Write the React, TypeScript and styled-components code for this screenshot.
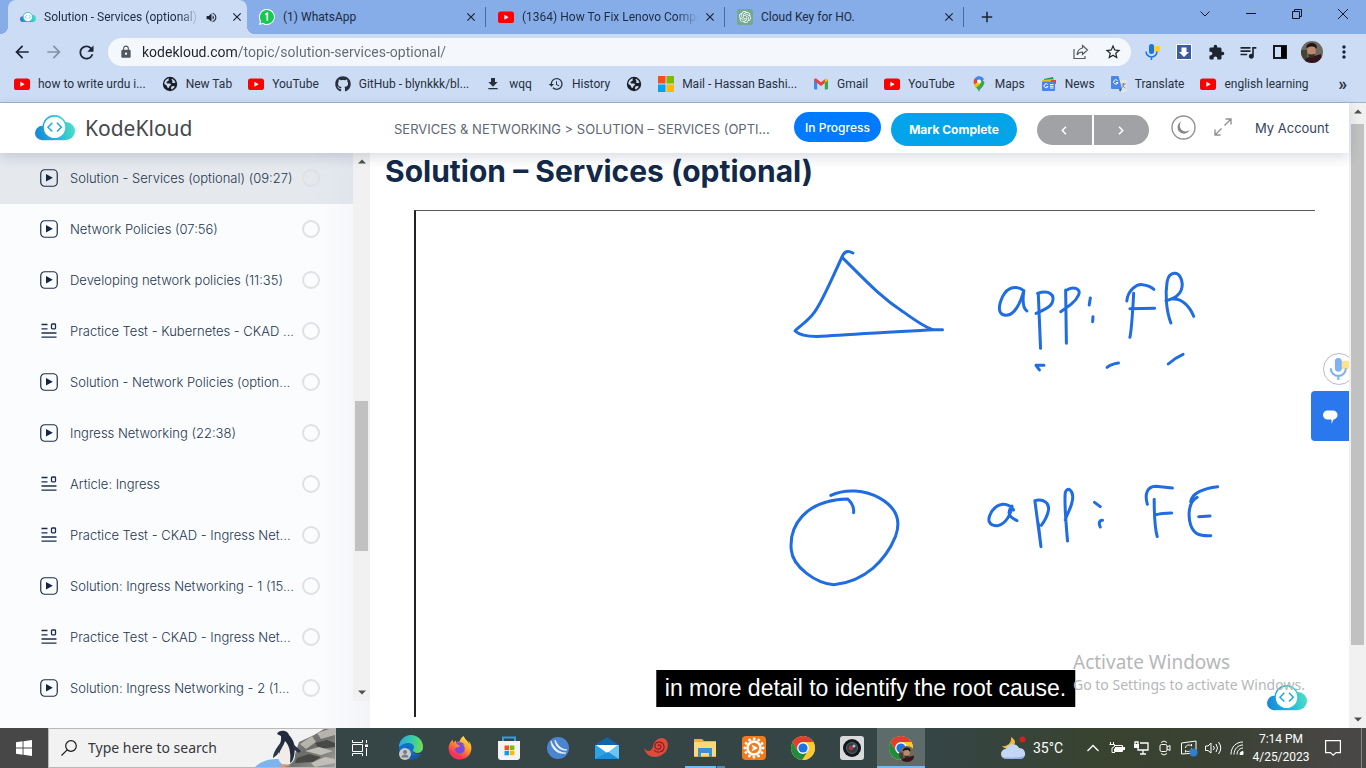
import React from 'react';
import styled, { createGlobalStyle, css } from 'styled-components';
import { FaGithub, FaFirefoxBrowser } from 'react-icons/fa';
import {
  MdArrowBack, MdArrowForward, MdRefresh, MdLock, MdExtension, MdQueueMusic, MdMoreVert,
  MdStarBorder, MdClose, MdAdd, MdVolumeUp, MdHistory, MdDownload,
} from 'react-icons/md';
import { SiOpenai } from 'react-icons/si';

const ui = `"Noto Sans", "Open Sans", sans-serif`;
const chromeFont = `Roboto, "Open Sans", sans-serif`;
const inter = `Inter, "Liberation Sans", sans-serif`;

const GlobalStyle = createGlobalStyle`
  *, *::before, *::after { box-sizing: border-box; }
  body { margin: 0; background: #fff; font-family: ${ui}; }
  button { border: 0; padding: 0; background: none; font: inherit; color: inherit; cursor: pointer; }
  a { color: inherit; text-decoration: none; }
  ul { list-style: none; margin: 0; padding: 0; }
  svg { display: block; flex: none; }
`;

const Desktop = styled.div`
  display: flex;
  flex-direction: column;
  height: 100vh;
  overflow: hidden;
`;

/* Browser window */

const TabStrip = styled.div`
  display: flex;
  height: 34px;
  padding-left: 8px;
  background: #86ade8;
  font-family: ${chromeFont};
  flex: none;
`;

const TabBox = styled.div<{ $active?: boolean }>`
  position: relative;
  display: flex;
  align-items: center;
  gap: 8px;
  width: 239px;
  padding: 0 7px 0 12px;
  font-size: 12px;
  line-height: 16px;
  color: #1d2a3f;
  ${p => p.$active
    ? css`
        padding-right: 2px;
        background: #ccdcf5;
        border-radius: 8px 8px 0 0;
        &::before, &::after {
          content: '';
          position: absolute;
          bottom: 0;
          width: 8px;
          height: 8px;
        }
        &::before { left: -8px; background: radial-gradient(circle at 0 0, #86ade8 8px, #ccdcf5 8px); }
        &::after { right: -8px; background: radial-gradient(circle at 100% 0, #86ade8 8px, #ccdcf5 8px); }
      `
    : css`
        &::after {
          content: '';
          position: absolute;
          right: 0;
          top: 7px;
          height: 20px;
          border-right: 1px solid #4d6a99;
        }
      `}
`;

const TabTitle = styled.span<{ $fade?: boolean }>`
  flex: 1;
  min-width: 0;
  overflow: hidden;
  white-space: nowrap;
  ${p => p.$fade && css`mask-image: linear-gradient(90deg, #000 88%, transparent);`}
`;

const IconButton = styled.button<{ $size?: number }>`
  display: flex;
  align-items: center;
  justify-content: center;
  width: ${p => p.$size ?? 16}px;
  height: ${p => p.$size ?? 16}px;
  flex: none;
  color: #1c2430;
`;

const MuteButton = styled(IconButton)`
  margin: 0 2px 0 -4px;
`;

const CloseButton = styled(IconButton)`
  margin-left: -4px;
`;

const NewTab = styled(IconButton)`
  align-self: center;
  margin-left: 8px;
`;

const WindowControls = styled.div`
  display: flex;
  margin-left: auto;
  height: 28px;
  svg { stroke: #101820; fill: none; }
`;

const WindowButton = styled.button`
  width: 46px;
  display: flex;
  align-items: center;
  justify-content: center;
`;

const Toolbar = styled.div`
  display: flex;
  align-items: center;
  height: 36px;
  padding: 0 6px;
  background: #ccdcf5;
  flex: none;
`;

const Omnibox = styled.div`
  display: flex;
  align-items: center;
  flex: 1;
  height: 28px;
  margin: 0 5px 0 6px;
  padding: 0 2px 0 11px;
  border-radius: 14px;
  background: #f4f8fd;
  color: #53585f;
`;

const Address = styled.input`
  flex: 1;
  min-width: 0;
  margin-left: 9px;
  padding: 0;
  border: 0;
  outline: 0;
  font: 14px/20px ${chromeFont};
  background: linear-gradient(90deg, #1f2328 95px, #62686f 95px);
  background-clip: text;
  -webkit-text-fill-color: transparent;
`;

const Bookmarks = styled.nav`
  display: flex;
  align-items: center;
  gap: 16px;
  height: 33px;
  padding: 0 19px 4px 14px;
  background: #ccdcf5;
  border-bottom: 1px solid #9fb2d0;
  font: 12px/16px ${chromeFont};
  color: #27303d;
  white-space: nowrap;
  flex: none;
`;

const BookmarkLink = styled.a`
  display: flex;
  align-items: center;
  gap: 8px;
`;

const More = styled.button`
  margin-left: auto;
  font-size: 18px;
  font-weight: 600;
`;

/* Course page */

const Viewport = styled.div`
  position: relative;
  display: flex;
  flex: 1;
  min-height: 0;
  background: #fff;
`;

const Page = styled.div`
  display: flex;
  flex-direction: column;
  flex: 1;
  min-width: 0;
`;

const SiteHeader = styled.header`
  position: relative;
  z-index: 1;
  display: flex;
  align-items: center;
  height: 50px;
  padding: 0 20px 0 35px;
  background: #fff;
  box-shadow: 0 4px 12px rgba(20, 40, 80, 0.16);
  font-family: ${inter};
  flex: none;
`;

const Brand = styled.a`
  display: flex;
  align-items: center;
  gap: 10px;
  width: 359px;
  font: 21px/28px ${ui};
  color: #45474b;
  flex: none;
`;

const Crumb = styled.p`
  flex: 1;
  min-width: 0;
  margin: 2px 0 0;
  font-size: 13px;
  line-height: 20px;
  color: #5f6774;
  white-space: nowrap;
`;

const Status = styled.button`
  width: 87px;
  height: 30px;
  margin: 0 10px 2px;
  border-radius: 15px;
  background: #007bff;
  color: #fff;
  font-size: 12px;
  font-weight: 500;
`;

const Complete = styled.button`
  width: 126px;
  height: 33px;
  margin: 2px 20px 0 0;
  border-radius: 17px;
  background: #03a4ea;
  color: #fff;
  font-size: 12px;
  font-weight: 700;
`;

const Pager = styled.div`
  display: flex;
  gap: 2px;
  width: 112px;
  height: 30px;
  margin: 4px 22px 0 0;
  border-radius: 15px;
  overflow: hidden;
`;

const PageButton = styled.button`
  display: flex;
  align-items: center;
  justify-content: center;
  flex: 1;
  background: #a0a2a5;
`;

const HeaderIcons = styled.div`
  display: flex;
  align-items: center;
  gap: 18px;
  margin: 0 23px 2px 0;
`;

const Account = styled.a`
  font-size: 13px;
  line-height: 20px;
  color: #34445c;
`;

const Columns = styled.div`
  display: flex;
  flex: 1;
  min-height: 0;
`;

const Sidebar = styled.aside`
  display: flex;
  align-items: flex-start;
  width: 370px;
  background: linear-gradient(90deg, #fafcfe 320px, #f2f4f8);
  overflow: hidden;
  flex: none;
`;

const Lessons = styled.ul`
  flex: 1;
  min-width: 0;
  font: 300 13px/20px ${inter};
  color: #26364f;
`;

const Lesson = styled.li<{ $current?: boolean }>`
  display: flex;
  align-items: center;
  gap: 12px;
  height: 51px;
  padding: 0 33px 2px 40px;
  ${p => p.$current && css`background: linear-gradient(90deg, #e5e9ee 310px, #e0e4ed);`}
`;

const LessonLink = styled.a`
  display: flex;
  align-items: center;
  gap: 12px;
  flex: 1;
  min-width: 0;
  white-space: nowrap;
`;

const Done = styled.input`
  appearance: none;
  width: 18px;
  height: 18px;
  margin: 0;
  border: 2px solid #dfe1e4;
  border-radius: 50%;
  flex: none;
`;

const ScrollBar = styled.div<{ $short?: boolean }>`
  position: relative;
  display: flex;
  flex-direction: column;
  align-items: center;
  justify-content: space-between;
  width: 17px;
  height: ${p => (p.$short ? '548px' : 'auto')};
  padding: 6px 0;
  background: #f1f1f1;
  flex: none;
`;

const Thumb = styled.div<{ $top: number; $height: number }>`
  width: 13px;
  height: ${p => p.$height}%;
  margin-top: ${p => p.$top}px;
  margin-bottom: auto;
  background: #c1c1c1;
`;

const Main = styled.main`
  display: flex;
  flex-direction: column;
  flex: 1;
  min-width: 0;
`;

const Title = styled.h1`
  margin: 0 15px;
  font: 700 30px/36px ${inter};
  color: #12294a;
`;

const Video = styled.section`
  position: relative;
  display: flex;
  flex: 1;
  min-height: 0;
  margin: 21px 34px 11px 44px;
  border-top: 1px solid #58595c;
  border-left: 2px solid #222326;
`;

const Board = styled.svg`
  width: 100%;
  height: 100%;
  fill: none;
  stroke: #1f6de0;
  stroke-width: 3;
  stroke-linecap: round;
  stroke-linejoin: round;
  path { vector-effect: non-scaling-stroke; }
`;

const Caption = styled.p`
  position: absolute;
  left: 50%;
  bottom: 10px;
  transform: translateX(-50%);
  margin: 0;
  padding: 0 9px;
  background: #000;
  color: #fff;
  font: 23px/37px "Liberation Sans", sans-serif;
  white-space: nowrap;
`;

const Badge = styled.div`
  position: absolute;
  right: 8px;
  bottom: 6px;
`;

const Activation = styled.div`
  position: absolute;
  right: 57px;
  bottom: 33px;
  width: 236px;
  z-index: 2;
  color: #b6b7b9;
  white-space: nowrap;
  p { margin: 0; font-size: 14px; line-height: 20px; }
  p:first-child { font-size: 19px; line-height: 26px; }
`;

const MicBubble = styled.button`
  position: absolute;
  right: 11px;
  top: 250px;
  display: flex;
  align-items: center;
  justify-content: center;
  width: 32px;
  height: 32px;
  border: 1px solid #b9bcc2;
  border-radius: 50%;
  background: #fff;
  svg { opacity: 0.55; }
`;

const ChatButton = styled.button`
  position: absolute;
  right: 17px;
  top: 288px;
  display: flex;
  align-items: center;
  justify-content: center;
  width: 38px;
  height: 50px;
  border-radius: 4px 0 0 4px;
  background: #2a77ee;
`;

/* Taskbar */

const Taskbar = styled.footer`
  display: flex;
  height: 40px;
  background: linear-gradient(90deg, #484747 48px, #364647 340px, #354546 930px, #38432f 1100px, #3b4134 1230px, #494746 1340px);
  color: #fff;
  flex: none;
`;

const TaskButton = styled.button<{ $active?: boolean; $space?: number }>`
  position: relative;
  display: flex;
  align-items: center;
  justify-content: center;
  width: 48px;
  margin-right: ${p => p.$space ?? 1}px;
  ${p => p.$active && css`background: #5e6b6b; box-shadow: inset 0 -2px #76b9ed;`}
`;

const Running = styled.span`
  position: absolute;
  left: 4px;
  right: 4px;
  bottom: 0;
  height: 2px;
  background: linear-gradient(90deg, #76b9ed 31px, #27496a 31px 32px, #5787ad 32px);
`;

const Search = styled.label`
  display: flex;
  align-items: center;
  width: 288px;
  padding-left: 12px;
  border: 1px solid #b9b9b9;
  background: #f2f2f2;
  overflow: hidden;
`;

const SearchInput = styled.input`
  flex: 1;
  min-width: 0;
  margin-left: 11px;
  padding: 0;
  border: 0;
  outline: 0;
  background: none;
  font: 14px/20px ${ui};
  &::placeholder { color: #35393d; opacity: 1; }
`;

const Tray = styled.div`
  display: flex;
  align-items: center;
  gap: 8px;
  margin-left: auto;
  font-family: ${chromeFont};
`;

const Weather = styled.button`
  display: flex;
  align-items: center;
  gap: 7px;
  margin-right: 14px;
  font-size: 14px;
  line-height: 20px;
`;

const Clock = styled.button`
  display: flex;
  flex-direction: column;
  align-items: center;
  width: 56px;
  font-size: 12px;
  line-height: 18px;
  white-space: nowrap;
`;

const ShowDesktop = styled.button`
  width: 5px;
  height: 40px;
  margin-left: 4px;
  border-left: 1px solid #86868a;
`;

/* Icons */

const YouTube = () => (
  <svg width="16" height="16" viewBox="0 0 16 16">
    <rect y="2.5" width="16" height="11.5" rx="2.6" fill="#f00" />
    <path d="M6.4 5.8v5l4.2-2.5z" fill="#fff" />
  </svg>
);

const Cloud = ({ width, id }: { width: number; id: string }) => (
  <svg width={width} height={width * 0.65} viewBox="0 0 40 26">
    <defs>
      <linearGradient id={id} gradientUnits="userSpaceOnUse" x1="0" y1="22" x2="40" y2="10">
        <stop stopColor="#1683d8" />
        <stop offset=".5" stopColor="#22b8da" />
        <stop offset="1" stopColor="#4fe0c4" />
      </linearGradient>
    </defs>
    <g fill={`url(#${id})`}>
      <circle cx="7.200" cy="18" r="7.200" />
      <circle cx="31" cy="16" r="9" />
      <path d="M7 11h24v14.200H7z" />
      <circle cx="19.500" cy="12" r="11.900" />
    </g>
    <circle cx="19.500" cy="12.400" r="10.700" fill="#fff" />
    <path d="M17.300 7.800 13 12.200l4.300 4.400M22 7.800l4.300 4.400-4.300 4.400" fill="none" stroke="#1ea9dc" strokeWidth="1.500" />
  </svg>
);

const Mic = ({ size = 16 }: { size?: number }) => (
  <svg width={size} height={size} viewBox="0 0 16 16">
    <rect x="9.500" y="2" width="6.500" height="6" rx="1" fill="#fc3" />
    <rect x="5" y="0" width="5" height="10" rx="2.500" fill="#1a73e8" />
    <path d="M2 7.500a5.500 5.500 0 0 0 11 0M7.500 13v3" fill="none" stroke="#1a73e8" strokeWidth="1.500" />
  </svg>
);

const Chrome = ({ size = 24 }: { size?: number }) => (
  <svg width={size} height={size} viewBox="0 0 24 24">
    <circle cx="12" cy="12" r="12" fill="#fcc934" />
    <path d="M1.610 6a12 12 0 0 0 9.400 17.950L17.200 15 12 12 6.800 15z" fill="#1e8e3e" />
    <path d="M12 6h10.390A12 12 0 0 1 12 24l5.200-9z" fill="#fcc934" />
    <path d="M1.610 6A12 12 0 0 1 22.390 6H12l-5.200 9z" fill="#e33b2e" />
    <circle cx="12" cy="12" r="5.900" fill="#fff" />
    <circle cx="12" cy="12" r="4.600" fill="#1a73e8" />
  </svg>
);

const Portrait = ({ size }: { size: number }) => (
  <svg width={size} height={size} viewBox="0 0 22 22">
    <defs><clipPath id={`face${size}`}><circle cx="11" cy="11" r="11" /></clipPath></defs>
    <g clipPath={`url(#face${size})`}>
      <path fill="#6d6a5d" d="M0 0h22v22H0z" />
      <path fill="#454238" d="M0 9h6v13H0z" />
      <path fill="#33161d" d="M3 22c1-5 4-6 7-6l10-3 2 9z" />
      <ellipse cx="10.500" cy="9.500" rx="4.300" ry="6" fill="#b98a6e" />
      <path fill="#1c1715" d="M5.500 7c-1-6 10-7 10.500-1l-1 2c-1-3-5-3-9-1z" />
      <path fill="#3c2a24" d="M7 13c2 .5 4 .5 7 0l-1 3-3 1-2-1z" />
    </g>
  </svg>
);

const Play = () => (
  <svg width="18" height="18" viewBox="0 0 18 18">
    <rect x=".75" y=".75" width="16.500" height="16.500" rx="4" fill="none" stroke="#1c2d49" strokeWidth="1.200" />
    <path d="M6 5v7.600L12.800 8.800z" fill="#142540" />
  </svg>
);

const Article = () => (
  <svg width="18" height="18" viewBox="0 0 18 18" fill="none" stroke="#1c2d49" strokeWidth="1.300">
    <path d="M1.500 2.500h6M1.500 6.800h6M1.500 11h15M1.500 15.200h15" />
    <rect x="11.500" y="2" width="4" height="4.800" rx=".8" />
  </svg>
);

const Microsoft = () => (
  <svg width="16" height="16" viewBox="0 0 16 16">
    <path fill="#f25022" d="M0 0h7.500v7.500H0z" />
    <path fill="#7fba00" d="M8.500 0H16v7.500H8.500z" />
    <path fill="#00a4ef" d="M0 8.500h7.500V16H0z" />
    <path fill="#ffb900" d="M8.500 8.500H16V16H8.500z" />
  </svg>
);

const Gmail = () => (
  <svg width="16" height="16" viewBox="0 0 16 16">
    <path fill="#4285f4" d="M1 3.500 4.200 6v7.500H2a1 1 0 0 1-1-1z" />
    <path fill="#34a853" d="M15 3.500 11.800 6v7.500H14a1 1 0 0 0 1-1z" />
    <path fill="#ea4335" d="M1 4c0-1.500 1.500-2 2.500-1.200L8 6.200l4.500-3.400V6.500L8 10 3.500 6.500z" />
    <path fill="#fbbc04" d="M11.800 3.300C13 2.200 15 2.500 15 4.200L11.800 7z" />
  </svg>
);

const Maps = () => (
  <svg width="16" height="16" viewBox="0 0 16 16">
    <path fill="#34a853" d="M8 16c-.6-3.200-4.800-5-5.200-10L8 .2 13.400 6c0 4.800-4.700 6.300-5.400 10z" />
    <path fill="#fbbc04" d="M3.200 8.200 11.500 2l-3 7-3.700 2.800z" />
    <path fill="#ea4335" d="M3.900 2.200 8 6 3 8C2.200 5.600 2.800 3.400 3.900 2.200z" />
    <path fill="#4285f4" d="M3.900 2.200C6-.6 11.500-.5 13 3.400L8 6z" />
    <circle cx="8" cy="5.500" r="2" fill="#fff" />
  </svg>
);

const News = () => (
  <svg width="16" height="16" viewBox="0 0 16 16">
    <path fill="#0f9d58" d="m3 3 9-2 1 5H3z" />
    <path fill="#fbbc04" d="M1 4l11-1v4H1z" />
    <path fill="#ea4335" d="M10 4h5v4h-5z" />
    <rect x="1" y="5.500" width="13" height="9.500" rx="1" fill="#4285f4" />
    <path d="M6.700 8.500a2 2 0 1 0 .3 2H5.500M9 8.600h3.500M9 10.300h3.500M9 12h3.500" fill="none" stroke="#fff" />
  </svg>
);

const Translate = () => (
  <svg width="16" height="16" viewBox="0 0 16 16">
    <path fill="#e2e4e8" d="M7 4h8a1 1 0 0 1 1 1v10a1 1 0 0 1-1 1H9z" />
    <path fill="#4a86e8" d="M1 0h6.500L11 13H1a1 1 0 0 1-1-1V1a1 1 0 0 1 1-1z" />
    <path fill="#2f5fb3" d="M8 13h3l-2 3z" />
    <path d="M6.500 4.500a2.200 2.200 0 1 0 .5 2H5" fill="none" stroke="#fff" />
    <path d="M10.500 8H15M12.700 7v1c0 2-1 3-2 4M11.500 9c1 2 2 2.500 3 3" fill="none" stroke="#6c7684" strokeWidth=".8" />
  </svg>
);

const Globe = () => (
  <svg width="16" height="16" viewBox="0 0 16 16">
    <circle cx="8" cy="8" r="7.200" fill="#1b2027" />
    <path fill="#ccdcf5" d="M7 2.200c-1.200 1 .5 1.600-.5 2.500C5.500 5.500 4.500 5 4.500 6.500s2 .6 3.500 1c1.500.5 1 1.800 0 2.200-1.200.6-.6 2.300-1.700 2.400-1.300 0-.9-2.300-2.300-3L2.300 8C2.300 5 4.500 2.700 7 2.200zM10 2.800c1.500.7 3 2.200 3.500 4-1.200-.3-2 .6-3 0-1-.7.5-1.600-.3-2.300-.6-.5-.8-1-.2-1.700zM9.500 10.500c1-.8 2.500-.6 3.300 0-.6 1.400-1.800 2.500-3.200 3-.6-1-.8-2.200-.1-3z" />
  </svg>
);

const Penguin = () => (
  <svg width="80" height="38" viewBox="0 0 80 38">
    <defs>
      <linearGradient id="rock" x1="0" y1="0" x2="1" y2="1">
        <stop stopColor="#8f8d88" /><stop offset=".5" stopColor="#6d6e6b" /><stop offset="1" stopColor="#a3a19b" />
      </linearGradient>
      <filter id="soft"><feGaussianBlur stdDeviation=".7" /></filter>
    </defs>
    <path d="M0 38c6-6 14-8 24-8l10 8z" fill="#7db3ee" />
    <path d="M30 38c4-6 4-8 10-13l4-12 15-7 10-6h12v38z" fill="url(#rock)" />
    <g filter="url(#soft)">
      <path d="m45 15 12-8 4 6-10 7zM62 4l12-4h6v6L66 10z" fill="#b5b3ac" />
      <path d="m60 14 12-3 8 3v4l-16 2zM42 29l12-4 12 3-8 5-18 1z" fill="#464846" />
      <path d="m50 22 14-4 14 4-12 4zM56 34l14-6 10 2v4l-20 4z" fill="#c0beb6" />
    </g>
    <path d="M26 7c1-4 6-4 7 0 5 5 8 12 7 20 0 5-4 9-9 9s-8-4-8-10c1-8 5-12 3-19z" fill="#f1ede6" />
    <path d="M22 5c2-5 11-4 12 1 5 5 7 12 5 21-1 4-2 6-4 7 1-9 0-17-5-22-1 4-5 9-6 13-2-5 3-11 2-18z" fill="#222b3d" />
    <path d="M26 13c-4 5-8 11-8 16l4-3 5-8zM38 15l8 7-2 2-6-4z" fill="#2b3549" />
    <path d="M25 36c2-1 8-1 11 1l-11 1z" fill="#d79a84" />
  </svg>
);

const Edge = () => (
  <svg width="26" height="26" viewBox="0 0 26 26">
    <defs>
      <linearGradient id="edgeTop" x1="0" y1=".4" x2="1" y2=".5">
        <stop stopColor="#2aa7e8" /><stop offset=".6" stopColor="#3ccf9c" /><stop offset="1" stopColor="#74dc4e" />
      </linearGradient>
    </defs>
    <circle cx="13" cy="12.500" r="12" fill="#1170c9" />
    <path d="M1 12A12 12 0 0 1 25 12c0 4-3 6-6 6-4 0-5-2-3.500-4 2-4-3-7-8-5.500C4 9.500 2 11 1 12z" fill="url(#edgeTop)" />
    <path d="M11 11c-3 4 0 11 8 9l4-1c-2 4-7 6-12 5-6-3-5-11 0-13z" fill="#1557a8" />
    <path d="M24 18.500c-4 2-9 1-9-2.500 0 0 2 2.500 5 2 2 0 4-1 5-3z" fill="#37474a" />
    <circle cx="7" cy="19" r="6" fill="#c9cbcd" />
    <circle cx="7" cy="17" r="2" fill="#777b80" />
    <path d="M3.500 22.500c0-4 7-4 7 0z" fill="#777b80" />
  </svg>
);

const Firefox = () => (
  <svg width="24" height="24" viewBox="0 0 24 24">
    <defs>
      <linearGradient id="fox" x1=".8" y1="0" x2=".2" y2="1">
        <stop stopColor="#fff04a" /><stop offset=".4" stopColor="#ff9a2a" /><stop offset=".8" stopColor="#f5325b" />
      </linearGradient>
    </defs>
    <circle cx="12" cy="13" r="8" fill="#7a49dd" />
    <FaFirefoxBrowser size={24} fill="url(#fox)" />
  </svg>
);

const Store = () => (
  <svg width="24" height="24" viewBox="0 0 24 24">
    <path d="M6 6V1.500h12V6" fill="none" stroke="#2b9fe0" strokeWidth="2" />
    <path d="M1 5h22v16a3 3 0 0 1-3 3H4a3 3 0 0 1-3-3z" fill="#f3f3f3" />
    <path d="M7.500 9.500H12V14H7.500z" fill="#f25022" /><path d="M12.800 9.500h4.500V14h-4.500z" fill="#7fba00" />
    <path d="M7.500 14.800H12v4.500H7.500z" fill="#00a4ef" /><path d="M12.800 14.800h4.500v4.500h-4.500z" fill="#ffb900" />
  </svg>
);

const BlueGlobe = () => (
  <svg width="22" height="22" viewBox="0 0 22 22">
    <circle cx="11" cy="11" r="11" fill="#4a86d0" />
    <path d="M4 4c0 7 6 14 15 12-7 0-12-5-15-12zM8 3c0 6 5 11 12 10-6-1-9-4-12-10z" fill="#eef4fc" stroke="#eef4fc" strokeWidth=".7" />
  </svg>
);

const Mail = () => (
  <svg width="24" height="22" viewBox="0 0 24 22">
    <path d="M0 8 12 0l12 8v14H0z" fill="#1263a8" />
    <path d="M0 8h24v14H0z" fill="#2aa4e6" />
    <path d="M24 8v14L12 15z" fill="#66c6f5" />
    <path d="M1 8h22l-11 8z" fill="#fff" />
    <path d="M0 22l13-7 11 7z" fill="#1e8fdc" />
  </svg>
);

const Shell = () => (
  <svg width="24" height="22" viewBox="0 0 24 22">
    <path d="M0 11c3 4 7 4 9-1C10 3 16-1 21 2c5 4 3 12-2 15-6 5-17 4-19-6z" fill="#dc4b3c" />
    <path d="M10 13c3 4 11 2 10-4-1-5-8-5-9-1-1 4 5 6 6 2 0-2-2-3-3-1" fill="none" stroke="#8d1d1f" strokeWidth="1.200" />
  </svg>
);

const Explorer = () => (
  <svg width="22" height="20" viewBox="0 0 22 20">
    <path d="M0 1h8l2 2h12v16H0z" fill="#e9b33c" />
    <path d="M0 4h22v14H0z" fill="#fbd974" />
    <path d="M4 10h14v9h-3v-4H7v4H4z" fill="#3d8fd1" />
  </svg>
);

const OrangeApp = () => (
  <svg width="24" height="24" viewBox="0 0 24 24">
    <rect width="24" height="24" rx="4" fill="#f37a1d" />
    <circle cx="12" cy="12" r="9.200" fill="none" stroke="#fff" strokeWidth="2.800" strokeDasharray=".1 4.700" strokeLinecap="round" />
    <circle cx="12" cy="12" r="6.500" fill="none" stroke="#fff" strokeWidth="2.600" />
    <path d="m9.500 8.500 6.500 3.500-6.500 3.500 1.500-3.500z" fill="#fff" />
  </svg>
);

const Camera = () => (
  <svg width="24" height="24" viewBox="0 0 24 24">
    <rect width="24" height="24" rx="3" fill="#d9dadb" />
    <circle cx="12" cy="12" r="9" fill="#15181b" />
    <circle cx="12" cy="12" r="5.500" fill="#2b3e48" stroke="#5a6367" />
    <circle cx="11" cy="12" r="2.400" fill="#a53b35" />
    <circle cx="14" cy="10" r="1.500" fill="#aac5cf" />
  </svg>
);

const ActiveChrome = styled.span`
  position: relative;
  span { position: absolute; right: -2px; bottom: -2px; }
`;

/* Sections */

const Tab = ({ icon, title, active, fade }: { icon: React.ReactNode; title: string; active?: boolean; fade?: boolean }) => (
  <TabBox $active={active}>
    {icon}
    <TabTitle $fade={fade}>{title}</TabTitle>
    {active && <MuteButton aria-label="Mute tab"><MdVolumeUp size={13} /></MuteButton>}
    {active
      ? <IconButton aria-label="Close tab"><MdClose size={14} /></IconButton>
      : <CloseButton aria-label="Close tab"><MdClose size={14} /></CloseButton>}
  </TabBox>
);

const bookmarks: [React.ReactNode, string][] = [
  [<YouTube />, 'how to write urdu i...'],
  [<Globe />, 'New Tab'],
  [<YouTube />, 'YouTube'],
  [<FaGithub size={16} />, 'GitHub - blynkkk/bl...'],
  [<MdDownload size={16} />, 'wqq'],
  [<MdHistory size={16} />, 'History'],
  [<Globe />, ''],
  [<Microsoft />, 'Mail - Hassan Bashi...'],
  [<Gmail />, 'Gmail'],
  [<YouTube />, 'YouTube'],
  [<Maps />, 'Maps'],
  [<News />, 'News'],
  [<Translate />, 'Translate'],
  [<YouTube />, 'english learning'],
];

const lessons: [boolean, string][] = [
  [true, 'Solution - Services (optional) (09:27)'],
  [true, 'Network Policies (07:56)'],
  [true, 'Developing network policies (11:35)'],
  [false, 'Practice Test - Kubernetes - CKAD ...'],
  [true, 'Solution - Network Policies (option...'],
  [true, 'Ingress Networking (22:38)'],
  [false, 'Article: Ingress'],
  [false, 'Practice Test - CKAD - Ingress Net...'],
  [true, 'Solution: Ingress Networking - 1 (15...'],
  [false, 'Practice Test - CKAD - Ingress Net...'],
  [true, 'Solution: Ingress Networking - 2 (1...'],
];

const Arrow = ({ down }: { down?: boolean }) => (
  <svg width="8" height="5" viewBox="0 0 8 5">
    <path d={down ? 'M0 .5h8L4 4.500z' : 'M0 4.500h8L4 .5z'} fill="#505050" />
  </svg>
);

const Browser = () => (
  <>
    <TabStrip>
      <Tab active fade icon={<Cloud width={16} id="tabCloud" />} title="Solution - Services (optional)" />
      <Tab
        icon={
          <svg width="16" height="16" viewBox="0 0 16 16">
            <path d="M8 0a8 8 0 1 1-4 15l-4 1 1-4A8 8 0 0 1 8 0z" fill="#fff" />
            <path d="M8 1a7 7 0 1 1-4 12.800l-2.500.7.700-2.500A7 7 0 0 1 8 1z" fill="#17c950" />
            <path d="m6.300 5.500 2-1.200v7.500" fill="none" stroke="#fff" strokeWidth="1.600" />
          </svg>
        }
        title="(1) WhatsApp"
      />
      <Tab fade icon={<YouTube />} title="(1364) How To Fix Lenovo Compu" />
      <Tab
        icon={
          <svg width="16" height="16" viewBox="0 0 16 16">
            <rect width="16" height="16" rx="2" fill="#74a892" />
            <g transform="translate(2 2)"><SiOpenai size={12} color="#fff" /></g>
          </svg>
        }
        title="Cloud Key for HO."
      />
      <NewTab aria-label="New tab" $size={30}><MdAdd size={18} /></NewTab>
      <WindowControls>
        <WindowButton aria-label="Search tabs"><svg width="10" height="6"><path d="M.5.5 5 5 9.500.5" /></svg></WindowButton>
        <WindowButton aria-label="Minimize"><svg width="10" height="2"><path d="M0 .5h10" /></svg></WindowButton>
        <WindowButton aria-label="Restore"><svg width="10" height="10"><path d="M.5 2.500h7v7h-7zM2.500 2.500v-2h7v7h-2" /></svg></WindowButton>
        <WindowButton aria-label="Close"><svg width="10" height="10"><path d="m0 0 10 10M10 0 0 10" /></svg></WindowButton>
      </WindowControls>
    </TabStrip>
    <Toolbar>
      <IconButton aria-label="Back" $size={32}><MdArrowBack size={20} /></IconButton>
      <IconButton aria-label="Forward" $size={32}><MdArrowForward size={20} opacity={0.4} /></IconButton>
      <IconButton aria-label="Reload" $size={32}><MdRefresh size={21} /></IconButton>
      <Omnibox>
        <MdLock size={14} />
        <Address aria-label="Address" defaultValue="kodekloud.com/topic/solution-services-optional/" />
        <IconButton aria-label="Share" $size={32}>
          <svg width="16" height="16" viewBox="0 0 16 16" fill="none" stroke="#53585f" strokeWidth="1.200">
            <path d="M1 5v9.500h11V12M9.500 1.500l5 4.500-5 4.500V8C7 8 5.200 9 4 11c.3-3.600 2-6.300 5.500-7z" />
          </svg>
        </IconButton>
        <IconButton aria-label="Bookmark" $size={32}><MdStarBorder size={18} /></IconButton>
      </Omnibox>
      <IconButton aria-label="Voice typing" $size={32}><Mic /></IconButton>
      <IconButton aria-label="Downloader" $size={32}>
        <svg width="16" height="16" viewBox="0 0 16 16">
          <path d="M0 0h16v16H0z" fill="#fff" /><path d="M1 1h14v14H1z" fill="#3b5da0" />
          <path d="M5.500 3.500h5V8H13l-5 5-5-5h2.500z" fill="#fff" />
        </svg>
      </IconButton>
      <IconButton aria-label="Extensions" $size={32}><MdExtension size={17} /></IconButton>
      <IconButton aria-label="Media" $size={32}><MdQueueMusic size={20} /></IconButton>
      <IconButton aria-label="Side panel" $size={32}>
        <svg width="14" height="14" viewBox="0 0 14 14">
          <path d="M1 1h12v12H1z" fill="none" stroke="#16191d" strokeWidth="2" /><path d="M8 1h5v12H8z" />
        </svg>
      </IconButton>
      <IconButton aria-label="Profile" $size={32}><Portrait size={22} /></IconButton>
      <IconButton aria-label="Menu" $size={32}><MdMoreVert size={20} /></IconButton>
    </Toolbar>
    <Bookmarks>
      {bookmarks.map(([icon, label], i) => (
        <BookmarkLink href="#" key={i} aria-label={label || 'Site'}>{icon}{label}</BookmarkLink>
      ))}
      <More aria-label="More bookmarks">»</More>
    </Bookmarks>
  </>
);

const Ink = () => (
  <Board viewBox="0 0 899 506" preserveAspectRatio="xMaxYMin meet" role="img" aria-label="Triangle and circle with selectors, app: FR and app: FE">
    <g transform="translate(354 19) scale(.38 .3333)">
      <path d="M218 69Q200 58 192 75C165 140 140 210 118 245C100 275 75 290 66 303C80 318 110 322 150 318C220 312 340 305 430 299H454" />
      <path d="M190 82C250 150 290 200 350 245C380 270 405 290 428 299" />
      <path d="M668 182C650 165 625 170 612 200C598 235 602 256 622 256C645 254 660 215 668 182C664 215 665 235 676 243" />
      <path d="M706 190L712 355M704 190C735 178 752 195 742 220C735 235 715 243 700 250" />
      <path d="M778 180L780 340M778 182C800 165 820 178 812 195C805 215 785 230 765 245" />
      <path d="M843 204L840 225M850 260L849 275" />
      <path d="M939 213C942 180 965 162 980 164C995 166 1005 172 1010 178M957 190C955 230 952 300 947 322M947 236L1012 235" />
      <path d="M1055 279C1042 240 1040 190 1045 155C1050 125 1075 120 1083 150C1090 180 1075 205 1042 212M1060 207C1085 205 1105 230 1115 259" />
      <path d="M709 420L700 406L721 406M887 412Q898 402 917 399M1048 402Q1065 384 1087 373" />
    </g>
    <g transform="translate(354 259) scale(.38 .3333)">
      <path d="M160 76C200 55 250 60 290 85C335 115 345 155 330 200C305 270 250 335 168 344C120 340 60 290 56 240C50 170 90 90 204 87Q222 105 220 128" />
      <path d="M641 120C625 95 600 98 583 125C570 150 575 168 600 167C622 160 635 130 637 108C625 125 625 140 650 152" />
      <path d="M697 92L713 230L706 160M697 92C720 85 738 100 732 125Q728 145 714 166" />
      <path d="M783 213C778 150 775 90 777 68C782 48 800 60 796 90C793 115 782 130 777 150" />
      <path d="M854 97L869 110M875 151Q862 152 869 171" />
      <path d="M993 103C985 70 993 50 1015 49L1059 54M1011 88C1011 130 1013 175 1019 200M1013 135Q1030 129 1057 129" />
      <path d="M1178 50C1140 55 1110 70 1107 95M1124 82C1100 95 1100 140 1107 165C1115 190 1125 198 1160 197M1128 140L1158 138" />
    </g>
  </Board>
);

const CoursePage = () => (
  <Viewport>
    <Page>
      <SiteHeader>
        <Brand href="#"><Cloud width={40} id="brandCloud" />KodeKloud</Brand>
        <Crumb>SERVICES &amp; NETWORKING &gt; SOLUTION – SERVICES (OPTI...</Crumb>
        <Status>In Progress</Status>
        <Complete>Mark Complete</Complete>
        <Pager>
          <PageButton aria-label="Previous"><svg width="6" height="9"><path d="M5 .8 1.300 4.500 5 8.200" fill="none" stroke="#fff" strokeWidth="1.500" /></svg></PageButton>
          <PageButton aria-label="Next"><svg width="6" height="9"><path d="M1 .8 4.700 4.500 1 8.200" fill="none" stroke="#fff" strokeWidth="1.500" /></svg></PageButton>
        </Pager>
        <HeaderIcons>
          <IconButton aria-label="Dark mode" $size={25}>
            <svg width="25" height="25" viewBox="0 0 25 25">
              <circle cx="12.500" cy="12.500" r="11.500" fill="none" stroke="#8f9194" strokeWidth="1.400" />
              <path d="M10.500 6.500a6.300 6.300 0 1 0 8.200 8.200A5.600 5.600 0 0 1 10.500 6.500z" fill="#85878b" />
            </svg>
          </IconButton>
          <IconButton aria-label="Full screen" $size={18}>
            <svg width="18" height="18" viewBox="0 0 18 18" fill="none" stroke="#8f9194" strokeWidth="1.400">
              <path d="M11.500 1H17v5.500M17 1l-6.500 6.500M6.500 17H1v-5.500M1 17l6.500-6.500" />
            </svg>
          </IconButton>
        </HeaderIcons>
        <Account href="#">My Account</Account>
      </SiteHeader>
      <Columns>
        <Sidebar>
          <Lessons>
            {lessons.map(([video, label], i) => (
              <Lesson key={i} $current={i === 0}>
                <LessonLink href="#">{video ? <Play /> : <Article />}{label}</LessonLink>
                <Done type="checkbox" aria-label={`${label} completed`} />
              </Lesson>
            ))}
          </Lessons>
          <ScrollBar $short><Arrow /><Thumb $top={237} $height={28} /><Arrow down /></ScrollBar>
        </Sidebar>
        <Main>
          <Title>Solution – Services (optional)</Title>
          <Video>
            <Ink />
            <Caption>in more detail to identify the root cause.</Caption>
            <Badge><Cloud width={40} id="badgeCloud" /></Badge>
          </Video>
        </Main>
      </Columns>
    </Page>
    <Activation><p>Activate Windows</p><p>Go to Settings to activate Windows.</p></Activation>
    <MicBubble aria-label="Dictate"><Mic size={22} /></MicBubble>
    <ChatButton aria-label="Chat">
      <svg width="16" height="16" viewBox="0 0 16 16"><path d="M5.500 2.500h5a4.500 4.500 0 0 1 1 9L9.500 16v-4.500h-4a4.500 4.500 0 0 1 0-9z" fill="#fff" /></svg>
    </ChatButton>
    <ScrollBar><Arrow /><Thumb $top={10} $height={85} /><Arrow down /></ScrollBar>
  </Viewport>
);

const WindowsBar = () => (
  <Taskbar>
    <TaskButton aria-label="Start" $space={0}>
      <svg width="16" height="16" viewBox="0 0 16 16" fill="#fff"><path d="M0 2.200 6.600 1.300v6.300H0zM7.500 1.200 16 0v7.600H7.500zM0 8.400h6.600v6.300L0 13.800zM7.500 8.400H16V16l-8.500-1.200z" /></svg>
    </TaskButton>
    <Search>
      <svg width="16" height="16" viewBox="0 0 16 16" fill="none" stroke="#1c1c1c" strokeWidth="1.200"><circle cx="10" cy="6" r="5.300" /><path d="M6.200 9.800.5 15.500" /></svg>
      <SearchInput placeholder="Type here to search" />
      <Penguin />
    </Search>
    <TaskButton aria-label="Task view" $space={3}>
      <svg width="16" height="16" viewBox="0 0 16 16" fill="none" stroke="#fff">
        <path d="M.5 0v2.500h10V0M.5 16v-2.500h10V16M.5 4.500h10v7H.5zM14.500 0v3M14.500 8v8" /><path d="M13 4.500h3v2.500h-3z" fill="#fff" stroke="none" />
      </svg>
    </TaskButton>
    <TaskButton aria-label="Edge"><Edge /></TaskButton>
    <TaskButton aria-label="Firefox"><Firefox /></TaskButton>
    <TaskButton aria-label="Store"><Store /></TaskButton>
    <TaskButton aria-label="Globe"><BlueGlobe /></TaskButton>
    <TaskButton aria-label="Mail"><Mail /></TaskButton>
    <TaskButton aria-label="Nautilus"><Shell /></TaskButton>
    <TaskButton aria-label="File Explorer"><Explorer /><Running /></TaskButton>
    <TaskButton aria-label="Player"><OrangeApp /></TaskButton>
    <TaskButton aria-label="Chrome"><Chrome /></TaskButton>
    <TaskButton aria-label="Camera"><Camera /></TaskButton>
    <TaskButton aria-label="Chrome, running" $active>
      <ActiveChrome><Chrome /><span><Portrait size={16} /></span></ActiveChrome>
    </TaskButton>
    <Tray>
      <Weather>
        <svg width="25" height="24" viewBox="0 0 25 24">
          <path d="M10 1c1 5-3 10-9 9 4 5 13 2 13-4 0-2-2-4-4-5z" fill="#f6b73c" />
          <circle cx="21.500" cy="3.500" r="3" fill="#c8261e" />
          <path d="M5 23a5 5 0 0 1 0-10c2-6 11-6 13-1 8 0 8 11 1 11z" fill="#c3d6f4" />
          <path d="M2 21c5 1 15 1 21-1-1 2-3 3-5 3H5c-1 0-2-1-3-2z" fill="#8fb0e6" />
        </svg>
        35°C
      </Weather>
      <IconButton aria-label="Hidden icons"><svg width="12" height="8" fill="none" stroke="#fff" strokeWidth="1.300"><path d="m.5 7 5.500-5.500L11.500 7" /></svg></IconButton>
      <IconButton aria-label="Battery">
        <svg width="16" height="12" viewBox="0 0 16 12" fill="none" stroke="#fff"><path d="M5.500 3.500h8v6h-8v-3" /><path d="M6 5h7v4H6zM14 5h2v3h-2z" fill="#fff" stroke="none" /><path d="M1.500 0v2M4.500 0v2M.5 2.500h5v2L3 6v4.500h3" /></svg>
      </IconButton>
      <IconButton aria-label="Network">
        <svg width="16" height="14" viewBox="0 0 16 14" fill="none" stroke="#fff" strokeWidth="1.300"><path d="M7 2h8v7H5V7M10 9v3.500M7 13h6" /><path d="M1 3h5v4H1z" fill="#fff" stroke="none" /><path d="M2 3V1h3v2" /></svg>
      </IconButton>
      <IconButton aria-label="Meet now">
        <svg width="14" height="16" viewBox="0 0 14 16" fill="none" stroke="#fff"><rect x="2" y="4.500" width="7" height="7" rx="1.500" /><path d="m9 7 3-1.500v5L9 9M3 2.500Q6-.5 9 2.500M3 13.500q3 3 6 0" /></svg>
      </IconButton>
      <IconButton aria-label="Sync">
        <svg width="18" height="17" viewBox="0 0 18 17" fill="none" stroke="#fff"><path d="M1.500 3 16 1v12L1.500 14zM5.500 8c0-3 4-4 6-2V4M11.500 8.500c0 3-4 4-6 2v2" /><circle cx="13.500" cy="12.500" r="4" fill="#2f7fd0" stroke="none" /></svg>
      </IconButton>
      <IconButton aria-label="Volume">
        <svg width="17" height="14" viewBox="0 0 17 14" fill="none" stroke="#fff"><path d="M.5 5h2.500l3-3v10L3 9.500H.5zM8.500 5q1.500 2 0 4M11 3q3 4 0 8M13.500 1q4.500 6 0 12" /></svg>
      </IconButton>
      <IconButton aria-label="Wi-Fi">
        <svg width="14" height="14" viewBox="0 0 14 14" fill="none" stroke="#fff"><path d="M1 13.500C1 6 6 1 13 1M4 13.500C4 8 8 4 13 4M7 13.500c0-4 3-6.500 6-6.500" /><path d="M10 13.500c0-2 1-3 3-3v3z" fill="#fff" /></svg>
      </IconButton>
      <Clock><span>7:14 PM</span><span>4/25/2023</span></Clock>
      <IconButton aria-label="Notifications" $size={32}>
        <svg width="16" height="16" viewBox="0 0 16 16" fill="none" stroke="#fff" strokeWidth="1.200"><path d="M.6.6h14.800v12H11l-2.800 2.600-2.800-2.600H.6z" /></svg>
      </IconButton>
      <ShowDesktop aria-label="Show desktop" />
    </Tray>
  </Taskbar>
);

export default function App() {
  return (
    <Desktop>
      <GlobalStyle />
      <Browser />
      <CoursePage />
      <WindowsBar />
    </Desktop>
  );
}
